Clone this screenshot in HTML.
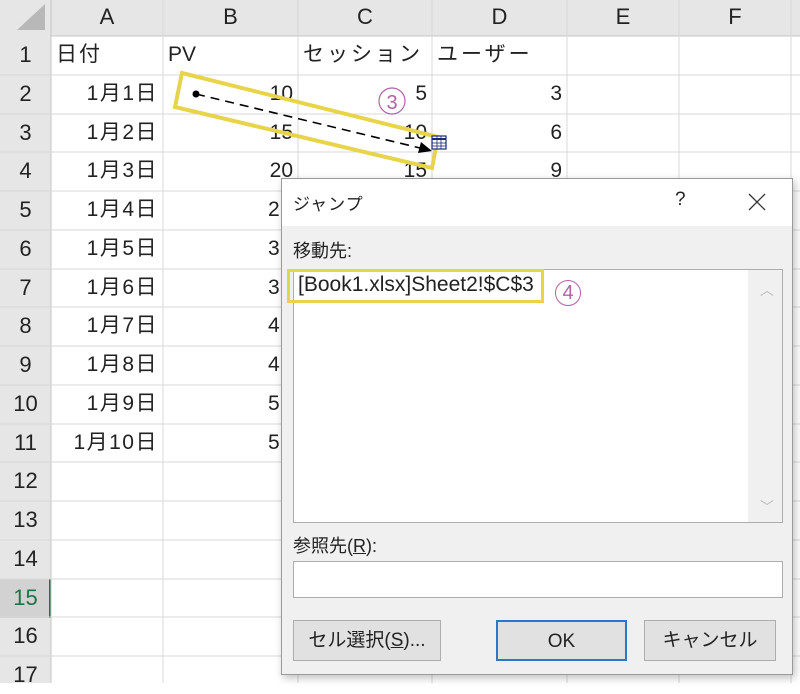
<!DOCTYPE html>
<html><head><meta charset="utf-8"><style>
*{margin:0;padding:0;box-sizing:border-box}
body{width:800px;height:683px;overflow:hidden;background:#fff;font-family:"Liberation Sans","Noto Sans CJK JP",sans-serif;position:relative;color:#222}
.a{position:absolute}
.t{position:absolute;font-size:21px;line-height:38px;white-space:nowrap}
.r{text-align:right}
.dlg{position:absolute;left:281px;top:178px;width:512px;height:497px;background:#f0f0f0;border:1px solid #9a9a9a;box-shadow:2px 3px 8px rgba(0,0,0,.25)}
.btn{position:absolute;top:441px;height:41px;background:#e1e1e1;border:1px solid #adadad;font-size:19px;text-align:center;line-height:39px}
</style></head><body>
<svg class="a" style="left:0;top:0" width="800" height="683">
<rect x="0" y="0" width="800" height="36" fill="#e6e6e6"/>
<rect x="0" y="0" width="51" height="683" fill="#e6e6e6"/>
<polygon points="17,30 45,30 45,4" fill="#b8b8b8"/>
<rect x="0" y="579" width="51" height="39" fill="#d2d2d2"/>
<line x1="50" y1="579" x2="50" y2="618" stroke="#217346" stroke-width="2"/>
<g stroke="#d4d4d4" stroke-width="1">
<line x1="51" y1="36" x2="800" y2="36" stroke="#c6c6c6"/>
<line x1="51" y1="0" x2="51" y2="683" stroke="#c6c6c6"/>
</g>
<g id="h" stroke="#d8d8d8"></g>
</svg>
<div id="cells"></div>
<svg class="a" style="left:0;top:0" width="800" height="683">
<polygon points="182,73 438,137 432,168 175,107" fill="none" stroke="#e8d44a" stroke-width="4"/>
<circle cx="196" cy="94" r="3.5" fill="#000"/>
<line x1="196" y1="94" x2="420" y2="148" stroke="#000" stroke-width="1.6" stroke-dasharray="9,6"/>
<polygon points="432,151 418,153 421,142" fill="#000"/>
<rect x="432" y="136" width="14" height="13" fill="#fff" stroke="#1a2a7a" stroke-width="1.2"/>
<line x1="432" y1="139" x2="446" y2="139" stroke="#1a2a7a" stroke-width="2"/>
<g stroke="#1a2a7a" stroke-width=".8"><line x1="432" y1="143" x2="446" y2="143"/><line x1="432" y1="146" x2="446" y2="146"/><line x1="437" y1="136" x2="437" y2="149"/><line x1="441" y1="136" x2="441" y2="149"/></g>
<circle cx="392" cy="101" r="13" fill="none" stroke="#b560a8" stroke-width="1.2"/>
<text x="392" y="109" font-size="20" text-anchor="middle" fill="#b560a8" font-family="Liberation Sans">3</text>
</svg>
<div class="dlg">
<div class="a" style="left:0;top:0;width:510px;height:47px;background:#fff"></div>
<div class="a" style="left:11px;top:11px;font-size:17px;letter-spacing:1px">ジャンプ</div>
<div class="a" style="left:393px;top:10px;font-size:19px">?</div>
<svg class="a" style="left:465px;top:13px" width="20" height="20"><path d="M2 2L18 18M18 2L2 18" stroke="#333" stroke-width="1.3"/></svg>
<div class="a" style="left:11px;top:58px;font-size:18px">移動先:</div>
<div class="a" style="left:11px;top:90px;width:490px;height:254px;background:#fff;border:1px solid #adadad"></div>
<div class="a" style="left:466px;top:91px;width:34px;height:252px;background:#f0f0f0"></div>
<div class="a" style="left:478px;top:101px;color:#bbb;font-size:14px">︿</div>
<div class="a" style="left:478px;top:318px;color:#bbb;font-size:14px">﹀</div>
<div class="a" style="left:5px;top:90px;width:257px;height:34px;border:3px solid #e8d44a"></div>
<div class="a" style="left:16px;top:94px;font-size:21px">[Book1.xlsx]Sheet2!$C$3</div>
<div class="a" style="left:273px;top:101px;width:26px;height:26px;border:1.2px solid #b560a8;border-radius:50%;color:#b560a8;font-size:20px;text-align:center;line-height:25px">4</div>
<div class="a" style="left:11px;top:353px;font-size:18px">参照先(<u>R</u>):</div>
<div class="a" style="left:11px;top:382px;width:490px;height:37px;background:#fff;border:1px solid #adadad"></div>
<div class="btn" style="left:11px;width:148px">セル選択(<u>S</u>)...</div>
<div class="btn" style="left:214px;width:131px;border:2px solid #2a78c8">OK</div>
<div class="btn" style="left:362px;width:132px">キャンセル</div>
</div>
<script>
var h=document.getElementById('h'),s='';
var cols=[51,163,298,432,567,679,791];
for(var i=1;i<cols.length;i++)s+='<line x1="'+cols[i]+'" y1="0" x2="'+cols[i]+'" y2="683"/>';
for(var r=1;r<=17;r++){var y=Math.round(36+r*38.75);s+='<line x1="0" y1="'+y+'" x2="800" y2="'+y+'"/>';}
h.innerHTML=s;
var c='',L=['A','B','C','D','E','F'];
for(i=0;i<6;i++)c+='<div class="t" style="left:'+cols[i]+'px;width:'+(cols[i+1]-cols[i])+'px;top:-2px;text-align:center;font-size:22px">'+L[i]+'</div>';
for(r=1;r<=17;r++){var y=36+(r-1)*38.75;c+='<div class="t" style="left:0;width:51px;text-align:center;top:'+y+'px;font-size:22px;'+(r==15?'color:#217346':'')+'">'+r+'</div>';}
function cell(r,ci,txt,right,ls){var y=36+(r-1)*38.75;c+='<div class="t'+(right?' r':'')+'" style="left:'+(cols[ci]+5)+'px;width:'+(cols[ci+1]-cols[ci]-10)+'px;top:'+y+'px;letter-spacing:'+(ls||0)+'px">'+txt+'</div>';}
cell(1,0,'日付',0,2);cell(1,1,'PV');cell(1,2,'セッション',0,3);cell(1,3,'ユーザー',0,3);
var B=[10,15,20,25,30,35,40,45,50,55];
for(r=2;r<=11;r++){cell(r,0,'1月'+(r-1)+'日',1,1.5);if(r<=4)cell(r,1,B[r-2],1);}
cell(2,2,'5',1);cell(3,2,'10',1);cell(4,2,'15',1);cell(2,3,'3',1);cell(3,3,'6',1);cell(4,3,'9',1);
for(r=5;r<=11;r++){var y=36+(r-1)*38.75;c+='<div class="t" style="left:268px;top:'+y+'px">'+String(B[r-2]).charAt(0)+'</div>';}
document.getElementById('cells').innerHTML=c;
</script>
</body></html>
